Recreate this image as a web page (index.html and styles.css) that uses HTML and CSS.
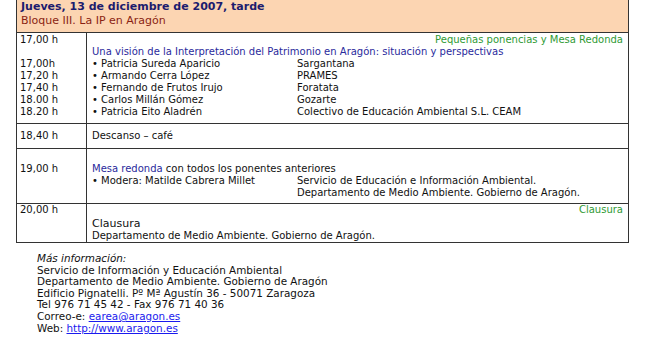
FILE: index.html
```html
<!DOCTYPE html>
<html lang="es">
<head>
<meta charset="utf-8">
<link rel="stylesheet" href="styles.css">
</head>
<body>
<div class="schedule">
  <div class="head">
    <div class="day">Jueves, 13 de diciembre de 2007, tarde</div>
    <div class="block">Bloque III. La IP en Aragón</div>
  </div>

  <div class="row r1">
    <div class="time">
      <div>17,00 h</div>
      <div>&nbsp;</div>
      <div>17,00h</div>
      <div>17,20 h</div>
      <div>17,40 h</div>
      <div>18.00 h</div>
      <div>18.20 h</div>
    </div>
    <div class="body">
      <div class="tag">Pequeñas ponencias y Mesa Redonda</div>
      <div class="blue">Una visión de la Interpretación del Patrimonio en Aragón: situación y perspectivas</div>
      <div class="people">
        <div>• Patricia Sureda Aparicio</div><div>Sargantana</div>
        <div>• Armando Cerra López</div><div>PRAMES</div>
        <div>• Fernando de Frutos Irujo</div><div>Foratata</div>
        <div>• Carlos Millán Gómez</div><div>Gozarte</div>
        <div>• Patricia Eito Aladrén</div><div>Colectivo de Educación Ambiental S.L. CEAM</div>
      </div>
    </div>
  </div>

  <div class="row r2">
    <div class="time">18,40 h</div>
    <div class="body">Descanso – café</div>
  </div>

  <div class="row r3">
    <div class="time">19,00 h</div>
    <div class="body">
      <div><span class="blue">Mesa redonda</span> con todos los ponentes anteriores</div>
      <div class="people">
        <div>• Modera: Matilde Cabrera Millet</div>
        <div>Servicio de Educación e Información Ambiental.<br>Departamento de Medio Ambiente. Gobierno de Aragón.</div>
      </div>
    </div>
  </div>

  <div class="row r4">
    <div class="time">20,00 h</div>
    <div class="body">
      <div class="tag">Clausura</div>
      <div class="big">Clausura</div>
      <div>Departamento de Medio Ambiente. Gobierno de Aragón.</div>
    </div>
  </div>
</div>

<div class="info">
  <div class="em">Más información:</div>
  <div>Servicio de Información y Educación Ambiental</div>
  <div>Departamento de Medio Ambiente. Gobierno de Aragón</div>
  <div>Edificio Pignatelli. Pº Mª Agustín 36 - 50071 Zaragoza</div>
  <div>Tel 976 71 45 42 - Fax 976 71 40 36</div>
  <div>Correo-e: <a href="#">earea@aragon.es</a></div>
  <div>Web: <a href="#">http://www.aragon.es</a></div>
</div>
</body>
</html>
```

FILE: styles.css
```css
html, body {
  margin: 0;
  padding: 0;
  background: #fff;
}
body {
  font-family: "DejaVu Sans", Verdana, sans-serif;
  font-size: 10px;
  line-height: 12px;
  color: #111;
}
.schedule {
  margin-left: 16px;
  width: 611px;
  border: 1px solid #333;
  border-top: none;
}
.head {
  background: #fcd5b2;
  padding: 0 4px;
  border-bottom: 1px solid #333;
  height: 33px;
  box-sizing: border-box;
}
.day {
  font-weight: bold;
  font-size: 11px;
  color: #1c1c6e;
  line-height: 13px;
}
.block {
  color: #8a1f12;
  font-size: 11px;
  line-height: 15px;
}
.row {
  display: grid;
  grid-template-columns: 70px 1fr;
  border-bottom: 1px solid #333;
}
.row:last-child { border-bottom: none; }
.time {
  border-right: 1px solid #333;
  padding-left: 3px;
}
.body {
  padding-left: 5px;
  padding-right: 5px;
}
.r1 .time, .r1 .body { padding-top: 1px; padding-bottom: 5px; }
.r2 .time, .r2 .body { padding-top: 6px; padding-bottom: 6px; }
.r3 .time, .r3 .body { padding-top: 14px; padding-bottom: 4px; }
.r4 .time, .r4 .body { padding-top: 0; padding-bottom: 0; }
.tag {
  text-align: right;
  color: #2f9a34;
}
.blue { color: #2a2a9c; }
.people {
  display: grid;
  grid-template-columns: 205px 1fr;
}
.big {
  font-size: 11px;
  margin-top: 2px;
}
.info {
  margin: 10px 0 0 37px;
  font-size: 10.4px;
  line-height: 11.6px;
}
.em { font-style: italic; }
.info a { color: #1a1aee; }
```
